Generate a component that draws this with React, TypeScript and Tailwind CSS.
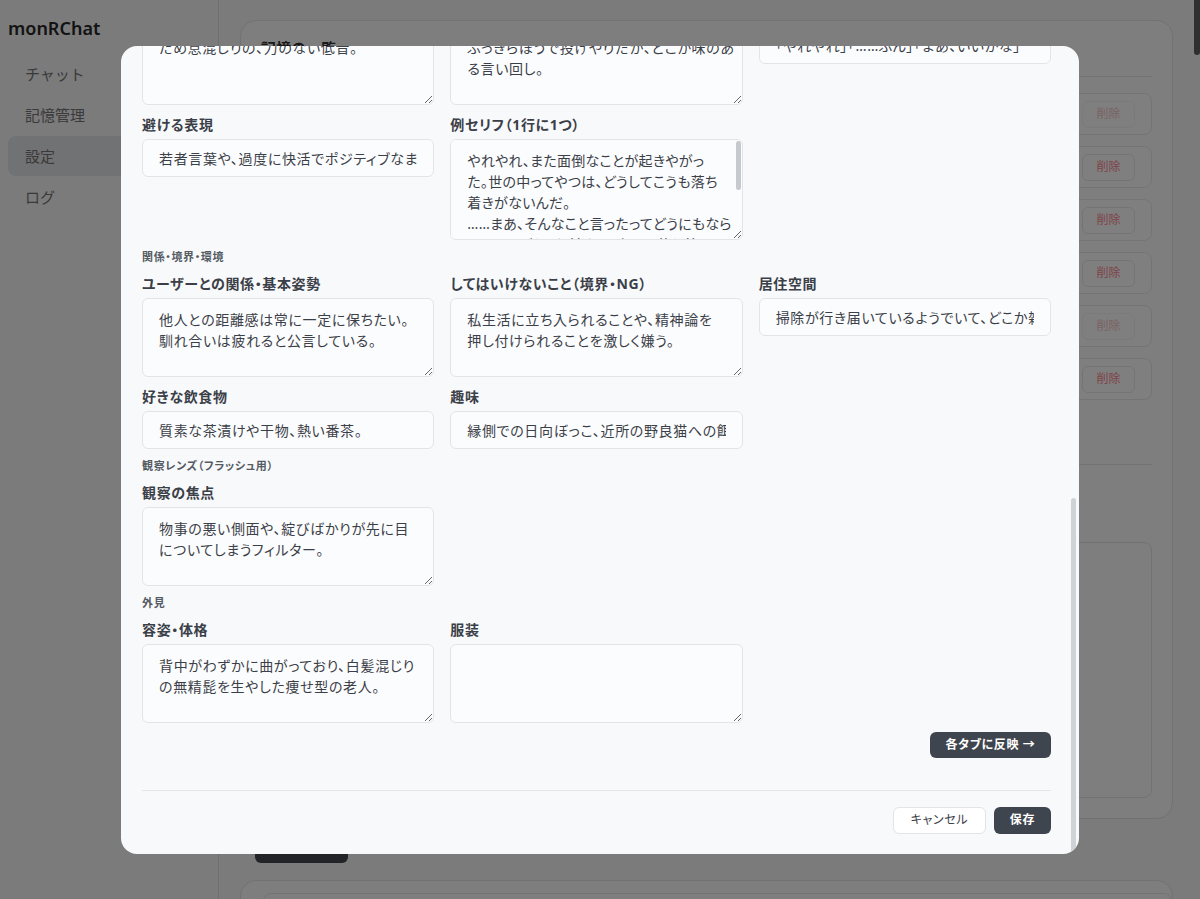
import { useLayoutEffect, useRef } from "react";

type Cell =
  | { t: "in"; label: string; value: string }
  | { t: "ta"; label: string; value: string; lg?: boolean }
  | { t: "none" };

type Section = { title: string; rows: Cell[][] };

const N: Cell = { t: "none" };

const sections: Section[] = [
  {
    title: "基本情報",
    rows: [
      [
        { t: "in", label: "名前", value: "源三" },
        { t: "in", label: "年齢", value: "七十二歳" },
        { t: "in", label: "性別", value: "男性" },
      ],
      [
        { t: "in", label: "一人称", value: "わし" },
        { t: "in", label: "二人称", value: "お前さん" },
        { t: "in", label: "職業", value: "元・時計職人（隠居）" },
      ],
    ],
  },
  {
    title: "性格・価値観",
    rows: [
      [
        { t: "ta", label: "性格の核", value: "皮肉屋で面倒くさがりだが、根は情に厚い。" },
        { t: "ta", label: "価値観", value: "静かで変わらない日常こそが一番の贅沢\nだと考えている。" },
        { t: "ta", label: "長所", value: "観察眼が鋭く、人の嘘にすぐ気づく。" },
      ],
      [
        { t: "ta", label: "短所", value: "素直になれず、感謝の言葉を口にできない。" },
        { t: "ta", label: "感情の出し方", value: "怒りも喜びも、ため息ひとつに込めてしま\nう。" },
        { t: "ta", label: "癖・しぐさ", value: "困ると顎髭を撫でる癖がある。" },
      ],
    ],
  },
  {
    title: "背景・経歴",
    rows: [
      [
        { t: "ta", label: "生い立ち", value: "下町の長屋で生まれ、十五で時計屋に弟\n子入りした。" },
        { t: "ta", label: "過去の出来事", value: "妻に先立たれてからは、店を畳んで一人\nで暮らしている。" },
        { t: "ta", label: "家族構成", value: "遠方に娘が一人。年に一度だけ電話があ\nる。" },
      ],
      [
        { t: "ta", label: "現在の生活", value: "朝は縁側で新聞を読み、昼寝をして一日\nを終える。" },
        { t: "ta", label: "秘密", value: "亡き妻の形見の懐中時計を、今も毎晩巻\nいている。" },
        { t: "ta", label: "大切なもの", value: "古い懐中時計と、使い込んだ工具箱。" },
      ],
    ],
  },
  {
    title: "能力・習慣",
    rows: [
      [
        { t: "ta", label: "特技", value: "どんなに古い時計でも、音を聞くだけで不\n調がわかる。" },
        { t: "ta", label: "苦手なこと", value: "機械仕掛けでないもの、特にスマートフォ\nン。" },
        { t: "ta", label: "日課", value: "毎朝五時に起き、近所の神社まで散歩す\nる。" },
      ],
      [
        { t: "in", label: "好きな言葉", value: "「急がば回れ」" },
        { t: "in", label: "嫌いなもの", value: "騒がしい若者と甘すぎる菓子。" },
        { t: "in", label: "持ち物", value: "懐中時計、煙管、手ぬぐい。" },
      ],
    ],
  },
  {
    title: "話し方",
    rows: [
      [
        { t: "ta", label: "声質・トーン", value: "ため息混じりの、力のない低音。" },
        { t: "ta", label: "話し方の特徴", value: "ぶっきらぼうで投げやりだが、どこか味のあ\nる言い回し。" },
        { t: "in", label: "口癖", value: "「やれやれ」「……ふん」「まあ、いいかな」" },
      ],
      [
        { t: "in", label: "避ける表現", value: "若者言葉や、過度に快活でポジティブなまくし立て方。" },
        {
          t: "ta",
          lg: true,
          label: "例セリフ（1行に1つ）",
          value:
            "やれやれ、また面倒なことが起きやがっ\nた。世の中ってやつは、どうしてこうも落ち\n着きがないんだ。\n……まあ、そんなこと言ったってどうにもなら\nんだろうがね。お前さん、少しは落ち着い\nたらどうだい。\nふん、好きにすればいいさ。わしは知ら\nんよ。\nまあ、いいかな。今日のところはこれで\n勘弁してやる。",
        },
        N,
      ],
    ],
  },
  {
    title: "関係・境界・環境",
    rows: [
      [
        { t: "ta", label: "ユーザーとの関係・基本姿勢", value: "他人との距離感は常に一定に保ちたい。\n馴れ合いは疲れると公言している。" },
        { t: "ta", label: "してはいけないこと（境界・NG）", value: "私生活に立ち入られることや、精神論を\n押し付けられることを激しく嫌う。" },
        { t: "in", label: "居住空間", value: "掃除が行き届いているようでいて、どこか雑然とした古い一軒家。" },
      ],
      [
        { t: "in", label: "好きな飲食物", value: "質素な茶漬けや干物、熱い番茶。" },
        { t: "in", label: "趣味", value: "縁側での日向ぼっこ、近所の野良猫への餌やり。" },
        N,
      ],
    ],
  },
  {
    title: "観察レンズ（フラッシュ用）",
    rows: [[{ t: "ta", label: "観察の焦点", value: "物事の悪い側面や、綻びばかりが先に目\nについてしまうフィルター。" }, N, N]],
  },
  {
    title: "外見",
    rows: [
      [
        { t: "ta", label: "容姿・体格", value: "背中がわずかに曲がっており、白髪混じり\nの無精髭を生やした痩せ型の老人。" },
        { t: "ta", label: "服装", value: "" },
        N,
      ],
    ],
  },
];

function Label({ children }: { children: string }) {
  return <label className="mb-1 block text-[14px] font-bold leading-5 text-[#3b4048]">{children}</label>;
}

function FieldCell({ c }: { c: Cell }) {
  if (c.t === "none") return <div />;
  if (c.t === "in")
    return (
      <div className="min-w-0">
        <Label>{c.label}</Label>
        <input
          readOnly
          value={c.value}
          className="block h-[38px] w-full rounded-md border border-[#e2e4e8] bg-[#fbfcfd] px-4 text-[14px] text-[#3b4048] outline-none"
        />
      </div>
    );
  if (c.lg)
    return (
      <div className="min-w-0">
        <Label>{c.label}</Label>
        <div className="relative">
          <textarea
            readOnly
            value={c.value}
            className="block h-[101px] w-full rounded-md border border-[#e2e4e8] bg-[#fbfcfd] py-[10px] pl-4 pr-0 text-[14px] leading-[21px] tracking-[0.02em] text-[#3b4048] outline-none"
          />
          <div className="pointer-events-none absolute right-[2px] top-[2px] h-[49px] w-[5px] rounded-full bg-[#c6c9ce]" />
        </div>
      </div>
    );
  return (
    <div className="min-w-0">
      <Label>{c.label}</Label>
      <textarea
        readOnly
        value={c.value}
        className="block h-[79px] w-full rounded-md border border-[#e2e4e8] bg-[#fbfcfd] py-[10px] pl-4 pr-1 text-[14px] leading-[21px] text-[#3b4048] outline-none"
      />
    </div>
  );
}

const memoryRows = [
  { text: "ユーザーは猫を飼っている", faded: true },
  { text: "ユーザーは夜型の生活をしている", faded: false },
  { text: "好きな食べ物はカレー", faded: false },
  { text: "週末はよく散歩に出かける", faded: false },
  { text: "仕事はエンジニア", faded: true },
  { text: "コーヒーより紅茶派", faded: false },
];

export default function App() {
  const scrollRef = useRef<HTMLDivElement>(null);
  useLayoutEffect(() => {
    const el = scrollRef.current;
    if (el) el.scrollTop = el.scrollHeight;
  }, []);

  return (
    <div className="relative h-[899px] overflow-hidden bg-[#f6f6f7] font-['Noto_Sans','Noto_Sans_CJK_JP',sans-serif]">
      {/* background app */}
      <div className="flex h-[899px]">
        <aside className="flex w-[219px] shrink-0 flex-col border-r border-[#dedfe2] px-2 pt-[14px]">
          <div className="text-[18px] font-semibold leading-7 text-[#262626]">monRChat</div>
          <nav className="mt-[12px] flex flex-col gap-px">
            {["チャット", "記憶管理", "設定", "ログ"].map((n) => (
              <div
                key={n}
                className={
                  n === "設定"
                    ? "flex h-10 items-center rounded-lg bg-[#e3e4e6] pl-[17px] text-[15px] text-[#747474]"
                    : "flex h-10 items-center rounded-lg pl-[17px] text-[15px] text-[#747474]"
                }
              >
                {n}
              </div>
            ))}
          </nav>
        </aside>
        <main className="min-w-0 flex-1 pl-[21px] pr-[27px] pt-5">
          <div className="h-[799px] overflow-hidden rounded-2xl border border-[#e3e4e7] bg-[#fcfcfd] px-5">
            <div className="flex h-[56px] items-center border-b border-[#e6e7e9] text-[15px] font-semibold text-[#333]">
              記憶の一覧
            </div>
            <div className="mt-4 flex flex-col gap-[11px]">
              {memoryRows.map((r) => (
                <div
                  key={r.text}
                  className="flex h-[42px] items-center justify-between rounded-lg border border-[#e8e9eb] bg-white px-4 text-[13px] text-[#555]"
                >
                  <span>{r.text}</span>
                  <span
                    className={
                      r.faded
                        ? "flex h-[27px] w-[53px] items-center justify-center rounded-md border border-[#f4f4f6] bg-white text-[12px] text-[#f4c4c8]"
                        : "flex h-[27px] w-[53px] items-center justify-center rounded-md border border-[#e8e9eb] bg-white text-[12px] text-[#ff8592]"
                    }
                  >
                    削除
                  </span>
                </div>
              ))}
            </div>
            <div className="mt-[64px] border-t border-[#e6e7e9] pt-4">
              <div className="text-[14px] font-semibold leading-5 text-[#333]">記憶を追加</div>
              <div className="mt-1 text-[12px] leading-4 text-[#888]">覚えておいてほしいことを入力してください。</div>
              <div className="mt-[21px] h-[256px] rounded-lg border border-[#e3e4e7]" />
            </div>
          </div>
          <div className="ml-[15px] mt-3 flex items-center gap-2">
            <div className="flex h-8 w-[93px] items-center justify-center rounded-md bg-[#46484e] text-[12px] font-bold text-white">
              記憶を保存
            </div>
            <span className="text-[12px] text-[#8a8a8a]">保存すると次の会話から反映されます</span>
          </div>
          <div className="mt-[17px] h-[120px] rounded-2xl border border-[#e3e4e7] bg-[#fcfcfd] pl-[22px] pt-3">
            <div className="h-[80px] rounded-lg border border-[#e6e7e9]" />
          </div>
        </main>
      </div>

      {/* dim overlay */}
      <div className="absolute inset-0 z-10 bg-[rgba(0,0,0,0.5)]" />
      <div className="absolute right-0 top-0 z-30 h-[55px] w-[6px] rounded-b-full bg-[#2f2f2f]" />

      {/* modal */}
      <div className="absolute inset-0 z-20 flex items-center justify-center">
        <div className="relative h-[808px] w-[958px] overflow-hidden rounded-2xl bg-[#f8f9fb]">
          <div
            ref={scrollRef}
            className="h-full overflow-y-auto pb-5 pl-[21px] pr-[28px] pt-5 tracking-[0.04em] [font-feature-settings:'palt'] [scrollbar-width:none]"
          >
            <div className="flex flex-col gap-[9px]">
              <div>
                <div className="text-[18px] font-bold leading-7 text-[#2f343b]">キャラクター設定</div>
                <div className="mt-1 text-[12px] leading-4 text-[#6b7280]">
                  各項目を編集して「各タブに反映」を押すと、対応するタブへ内容が反映されます。
                </div>
              </div>
              {sections.map((s) => (
                <section key={s.title}>
                  <h3 className="mb-[9px] text-[11px] font-semibold leading-4 text-[#555b63]">{s.title}</h3>
                  <div className="grid grid-cols-3 gap-x-4 gap-y-[10px]">
                    {s.rows.flatMap((row, ri) =>
                      row.map((c, ci) => <FieldCell key={`${s.title}-${ri}-${ci}`} c={c} />)
                    )}
                  </div>
                </section>
              ))}
              <div className="flex justify-end">
                <button className="h-[26px] w-[121px] rounded-md bg-[#3f454e] text-[12px] font-bold text-white">
                  各タブに反映 →
                </button>
              </div>
            </div>
            <div className="mt-8 flex justify-end gap-2 border-t border-[#e3e5e8] pt-4">
              <button className="h-[27px] w-[93px] rounded-md border border-[#e2e4e8] bg-white text-[12px] text-[#3b4048]">
                キャンセル
              </button>
              <button className="h-[27px] w-[57px] rounded-md bg-[#3f454e] text-[12px] font-bold text-white">保存</button>
            </div>
          </div>
          <div className="pointer-events-none absolute bottom-0 right-[3px] top-[452px] w-[5px] rounded-full bg-[#cfd2d7]" />
        </div>
      </div>
    </div>
  );
}
